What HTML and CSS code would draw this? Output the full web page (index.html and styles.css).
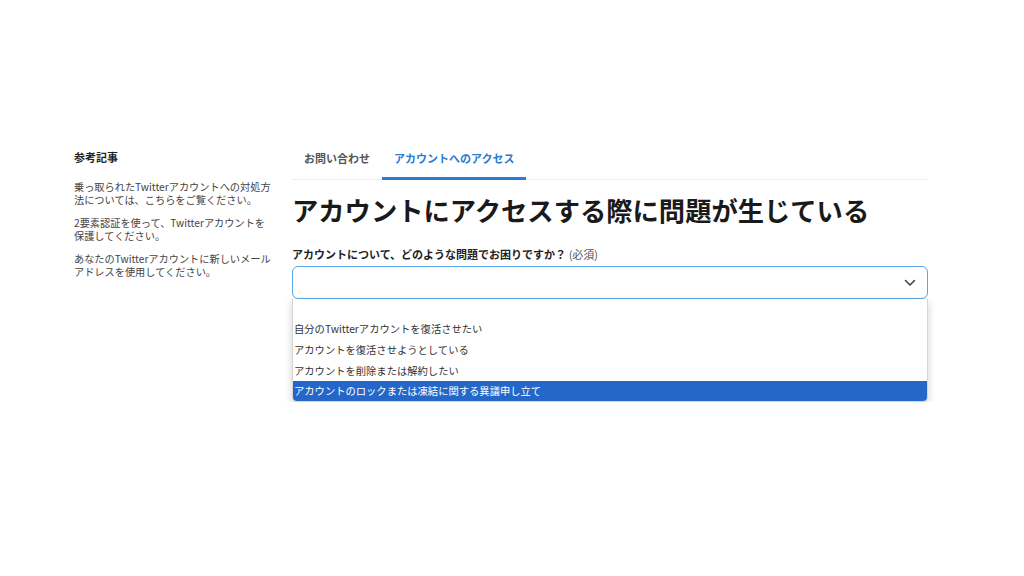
FILE: index.html
```html
<!DOCTYPE html>
<html lang="ja">
<head>
<meta charset="utf-8">
<title>アカウントへのアクセス</title>
<link rel="stylesheet" href="styles.css">
</head>
<body>
<div class="page">
  <aside class="sidebar">
    <h3 class="side-title">参考記事</h3>
    <p class="side-link">乗っ取られたTwitterアカウントへの対処方法については、こちらをご覧ください。</p>
    <p class="side-link">2要素認証を使って、Twitterアカウントを保護してください。</p>
    <p class="side-link">あなたのTwitterアカウントに新しいメールアドレスを使用してください。</p>
  </aside>
  <main class="main">
    <nav class="tabs">
      <span class="tab">お問い合わせ</span>
      <span class="tab active">アカウントへのアクセス</span>
    </nav>
    <h1 class="title">アカウントにアクセスする際に問題が生じている</h1>
    <label class="field-label">アカウントについて、どのような問題でお困りですか？ <span class="req">(必須)</span></label>
    <div class="select">
      <svg class="chev" width="12" height="8" viewBox="0 0 12 8"><path d="M1.5 1.5 L6 6 L10.5 1.5" fill="none" stroke="#444" stroke-width="1.6" stroke-linecap="round" stroke-linejoin="round"/></svg>
    </div>
    <div class="listbox">
      <div class="opt blank"></div>
      <div class="opt">自分のTwitterアカウントを復活させたい</div>
      <div class="opt">アカウントを復活させようとしている</div>
      <div class="opt">アカウントを削除または解約したい</div>
      <div class="opt selected">アカウントのロックまたは凍結に関する異議申し立て</div>
    </div>
  </main>
</div>
</body>
</html>
```
FILE: styles.css
```css
html, body {
  margin: 0;
  padding: 0;
  background: #fff;
}
body {
  font-family: "Noto Sans CJK JP", "Noto Sans", sans-serif;
  color: #333;
}
.page {
  display: flex;
  align-items: flex-start;
  padding: 145px 0 0 74px;
}
.sidebar {
  width: 201px;
  margin-right: 17px;
  padding-top: 5px;
}
.side-title {
  margin: 0 0 17px;
  font-size: 11px;
  line-height: 14px;
  font-weight: 700;
  color: #222;
}
.side-link {
  margin: 0 0 11px;
  font-size: 10.2px;
  line-height: 12.5px;
  color: #444;
}
.main {
  width: 636px;
}
.tabs {
  display: flex;
  height: 34px;
  border-bottom: 1px solid #ececec;
}
.tab {
  padding: 6px 12px 0;
  font-size: 11px;
  line-height: 14px;
  font-weight: 700;
  color: #555;
  box-sizing: border-box;
  height: 35px;
}
.tab.active {
  color: #2b7bd0;
  border-bottom: 3px solid #2a7bd4;
}
.title {
  margin: 13px 0 0;
  font-size: 26.3px;
  line-height: 34px;
  font-weight: 700;
  color: #1a1a1a;
}
.field-label {
  display: block;
  margin-top: 20px;
  font-size: 11px;
  line-height: 14px;
  font-weight: 700;
  color: #222;
}
.req {
  font-weight: 400;
  color: #555;
}
.select {
  margin-top: 5px;
  height: 33px;
  box-sizing: border-box;
  border: 1.5px solid #5aa6e8;
  border-radius: 6px;
  background: #fff;
  display: flex;
  align-items: center;
  justify-content: flex-end;
  padding-right: 11px;
}
.chev {
  display: block;
}
.listbox {
  background: #fff;
  border: 1px solid #d6d6d6;
  border-top: none;
  border-radius: 0 0 5px 5px;
  box-shadow: 0 3px 8px rgba(0, 0, 0, 0.18);
  overflow: hidden;
}
.opt {
  height: 21px;
  line-height: 21px;
  font-size: 10.3px;
  color: #333;
  padding-left: 1px;
  white-space: nowrap;
}
.opt.blank {
  height: 19px;
}
.opt.selected {
  background: #2467c9;
  color: #fff;
  height: 20px;
  line-height: 20px;
}
```
